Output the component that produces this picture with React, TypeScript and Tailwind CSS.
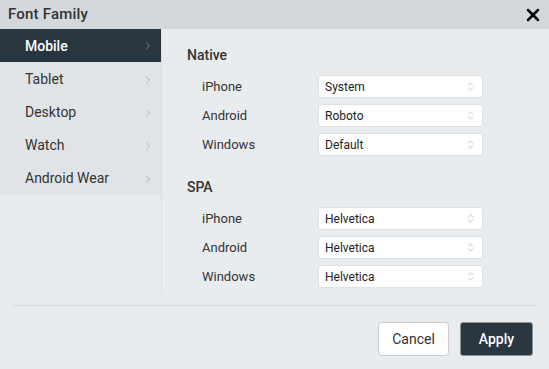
import { ChevronRight, ChevronsUpDown, X } from "lucide-react"

const tabs = ["Mobile", "Tablet", "Desktop", "Watch", "Android Wear"]

const groups = [
  {
    name: "Native",
    rows: [
      { label: "iPhone", value: "System" },
      { label: "Android", value: "Roboto" },
      { label: "Windows", value: "Default" },
    ],
  },
  {
    name: "SPA",
    rows: [
      { label: "iPhone", value: "Helvetica" },
      { label: "Android", value: "Helvetica" },
      { label: "Windows", value: "Helvetica" },
    ],
  },
]

function FontRow({ label, value }: { label: string; value: string }) {
  return (
    <div className="flex h-[23px] items-center">
      <span className="w-[131px] pl-[15px] text-[13px] text-[#333]">{label}</span>
      <div className="flex h-[23px] w-[165px] items-center justify-between rounded-[3px] border border-[#dfe2e5] bg-white pl-[6px] pr-[6px]">
        <span className="text-[12px] text-[#222]">{value}</span>
        <ChevronsUpDown size={11} strokeWidth={1.2} className="text-[#999]" />
      </div>
    </div>
  )
}

export default function App() {
  return (
    <div className="h-[369px] w-[549px] bg-[#e9ecef] font-['Roboto',sans-serif] text-[#333]">
      <div className="flex h-[29px] items-center justify-between bg-[#d5d8db] pl-[8px] pr-[6px]">
        <span className="text-[15px] font-medium tracking-[0.2px] text-[#333]">Font Family</span>
        <X size={20} strokeWidth={3} className="text-black" />
      </div>

      <div className="flex h-[264px]">
        <div className="w-[162px] border-r border-[#dcdfe2]">
          {tabs.map((t, i) => (
            <div
              key={t}
              className={
                i === 0
                  ? "flex h-[33px] items-center justify-between bg-[#29353f] pl-[25px] pr-[7px] pt-[1px] text-white"
                  : "flex h-[33px] items-center justify-between bg-[#e1e4e7] pl-[25px] pr-[7px] pt-[2px] text-[#333]"
              }
            >
              <span className={i === 0 ? "text-[14px] font-medium" : "text-[14px]"}>{t}</span>
              <ChevronRight size={12} strokeWidth={1.5} className="text-[#9aa1a8]" />
            </div>
          ))}
        </div>

        <div className="flex-1 pl-[25px] pt-[16px]">
          {groups.map((g, gi) => (
            <div key={g.name} className={gi === 0 ? "" : "mt-[21px]"}>
              <div className="mb-[10px] h-[20px] text-[14px] font-medium leading-[20px] text-[#333]">{g.name}</div>
              <div className="flex flex-col gap-[6px]">
                {g.rows.map((r) => (
                  <FontRow key={r.label} label={r.label} value={r.value} />
                ))}
              </div>
            </div>
          ))}
        </div>
      </div>

      <div className="mx-[13px] mt-[12px] border-t border-[#d6d9dc]" />

      <div className="flex justify-end gap-[11px] pr-[16px] pt-[16px]">
        <button className="h-[34px] w-[71px] rounded-[4px] border border-[#c9cdd1] bg-white text-[14px] text-[#333]">
          Cancel
        </button>
        <button className="h-[34px] w-[73px] rounded-[3px] border border-[#8a9299] bg-[#29353f] text-[14px] font-medium text-white">
          Apply
        </button>
      </div>
    </div>
  )
}
